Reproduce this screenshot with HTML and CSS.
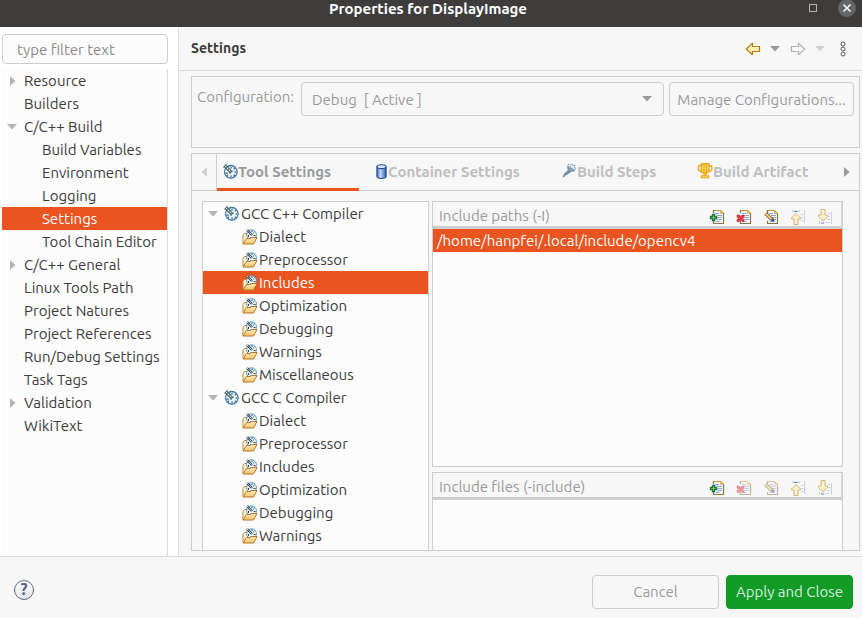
FILE: index.html
```html
<!DOCTYPE html>
<html lang="en">
<head>
<meta charset="utf-8">
<meta name="viewport" content="width=device-width, initial-scale=1">
<title>Properties for DisplayImage</title>
<link rel="stylesheet" href="styles.css">
</head>
<body>
<svg class="sprite" aria-hidden="true">
  <defs>
    <linearGradient id="gold" x1="0" y1="0" x2="0" y2="1"><stop offset="0" stop-color="#fffbe6"/><stop offset="1" stop-color="#fbe08c"/></linearGradient>
    <linearGradient id="blue" x1="0" y1="0" x2="1" y2="0"><stop offset="0" stop-color="#3c6ec0"/><stop offset=".4" stop-color="#c4d9f8"/><stop offset="1" stop-color="#2a58ae"/></linearGradient>
    <linearGradient id="folder" x1="0" y1="0" x2="0" y2="1"><stop offset="0" stop-color="#fff0bf"/><stop offset="1" stop-color="#f3c268"/></linearGradient>
  </defs>
  <symbol id="gauge" viewBox="0 0 14 14">
    <circle cx="7.300" cy="7.300" r="5.900" fill="#eef6ff" stroke="#3f77a3" stroke-width="1.200"/>
    <path d="M7.500 2.500v2M7.500 10.500v2M10.500 7.500h2M2.500 8.500h2M10 5l1.500-1.500M4.800 10l-1.300 1.300M10 10l1.500 1.500" stroke="#2c5d84"/>
    <path d="M1.500 1.500L8 8" stroke="#2b4a5f" stroke-width="2.800"/>
    <path d="M1.500 1.500L8 8" stroke="#e6e7b0" stroke-width="1.200" stroke-dasharray="2 .6"/>
    <path d="M0 3.500L3.500 0M6 9l3-3" stroke="#41667f" stroke-width=".8"/>
  </symbol>
  <symbol id="folder-gauge" viewBox="0 0 16 16">
    <path d="M1.500 14.500V6.500l1.500-2h2.500l1.500 1.500h6.500v4" fill="#fff3cf" stroke="#c08838"/>
    <circle cx="10" cy="5.700" r="4.900" fill="#f4f9ff" stroke="#4b93c4"/>
    <path d="M5.500 1l5 5" stroke="#2b4a5f" stroke-width="2.400"/>
    <path d="M5.500 1l5 5" stroke="#f0edb8" stroke-width="1" stroke-dasharray="1.500 .7"/>
    <path d="M10.500 1.500v1.500M13 3l-1.300 1.300M14 6.500h-2M7 6v2M11 8.500h2M9 8.500h1" stroke="#24425a"/>
    <path d="M1.500 15l3.500-5.500h4l1-1h5.500L12 15z" fill="url(#folder)" stroke="#b8752a"/>
  </symbol>
  <symbol id="cylinder" viewBox="0 0 10 14">
    <path d="M.7 2.500v9c0 2.600 8.600 2.600 8.600 0v-9z" fill="url(#blue)" stroke="#234c98"/>
    <ellipse cx="5" cy="2.500" rx="4.200" ry="1.800" fill="#d6e6fc" stroke="#234c98"/>
  </symbol>
  <symbol id="tool" viewBox="0 0 16 16">
    <path d="M.5 14.500l2-4L6 7.500 5.500 3l3-1 6 6-5 1-3 2.500-3 1.500-1.500 2z" fill="#7290a8"/>
    <path d="M6 2l1.500-1.500 1.500 1 2-1 1 2 2-.5-.5 2 1.500 1.500-1.500.5" fill="#dfe7ed" stroke="#7290a8" stroke-dasharray="2 1"/>
    <path d="M7 3.500l5 4M7 6l3 2" stroke="#a8bac7"/>
  </symbol>
  <symbol id="trophy" viewBox="0 0 16 16">
    <path d="M4 3H1.500Q.500 6 2 7.500T5 9M12 3h2.500q1 3-.5 4.500T11 9" fill="none" stroke="#eca321" stroke-width="1.300"/>
    <path d="M4 1q4-1 8 0v6q0 3-4 3.500Q4 10 4 7z" fill="#ffd75a" stroke="#eca321" stroke-width="1.300"/>
    <path d="M7 1v9M9.300 1v9" stroke="#eca321"/>
    <path d="M7 10h2v2.500H7zM4 12.800h8v2H4z" fill="#ffd75a" stroke="#eca321"/>
  </symbol>
  <symbol id="page" viewBox="0 0 16 16">
    <path d="M4.500 1.500h7l3 3v10h-10z" fill="#f2f6ff"/>
    <path d="M4 1.500h7.500l3 3" fill="none" stroke="#c29338" stroke-width="1.200"/>
    <path d="M4.500 1v3M14.500 4v10.500h-10V12" fill="none" stroke="#8d7741" stroke-width="1.200"/>
    <path d="M11 1.500V5h3.500z" fill="#e5b95f"/>
    <path d="M6 4.500h4M8 6.500h5M8 8.500h5M8 10.500h5M6.500 12.500h4" stroke="#8fa8d8"/>
  </symbol>
  <symbol id="add" viewBox="0 0 16 16">
    <use href="#page"/>
    <path d="M3.500 5.500h2v2h2v2h-2v2h-2v-2h-2v-2h2z" fill="#b9dc7c" stroke="#17763b" stroke-width="1.300"/>
  </symbol>
  <symbol id="remove" viewBox="0 0 16 16">
    <use href="#page"/>
    <path d="M1 6h2.500l1.300 1.500L6 6h2v2L6.700 9.300 8 10.500v2H6l-1.300-1.500-1.200 1.500H1v-2l1.500-1.200L1 8z" fill="#e23b46" stroke="#c8202d" stroke-width=".6"/>
  </symbol>
  <symbol id="edit" viewBox="0 0 16 16">
    <use href="#page"/>
    <path d="M2.500 4.500l6.500 6" stroke="#6d5128" stroke-width="3.400"/>
    <path d="M2.500 4.500l6 5.500" stroke="#f0c878" stroke-width="2"/>
    <path d="M8 12l3.500.8-.8-3.800z" fill="#30435c"/>
  </symbol>
  <symbol id="up" viewBox="0 0 16 16">
    <path d="M2.500 3V1M14.500 1v13M4 2.500h2M7 2.500h3M11 5.500h2M11 8.500h2M11 11.500h2" stroke="#c5d2e6"/>
    <path d="M3 1.500h8" stroke="#e1e4e6"/>
    <path d="M4 2.500h3" stroke="#5b83b8"/>
    <path d="M6 4.500L1.500 9v1H4v5.500h4V10h2.500V9z" fill="#fff1cc" stroke="#d4b67c"/>
  </symbol>
  <symbol id="down" viewBox="0 0 16 16">
    <path d="M2.500 12v3M14.500 3v12M11 4.500h2M11 7.500h2M10 10.500h3M8 13.500h4" stroke="#c5d2e6"/>
    <path d="M4 14h3" stroke="#5b83b8"/>
    <path d="M4 .500h4V6h2.500v1.500L6 12 1.500 7.500V6H4z" fill="#fff1cc" stroke="#d4b67c"/>
  </symbol>
  <symbol id="arrow-left" viewBox="0 0 16 14">
    <path d="M7.500 1.500v3h7v5h-7v3H7L1.300 7 7 1.500z" fill="url(#gold)" stroke="#bd7b0a" stroke-width="1.200"/>
  </symbol>
  <symbol id="arrow-right" viewBox="0 0 16 14">
    <path d="M8.500 1.500v3h-7v5h7v3H9L14.700 7 9 1.500z" fill="#fafafa" stroke="#b0b0b0" stroke-width="1.200"/>
  </symbol>
  <symbol id="caret" viewBox="0 0 10 6"><path d="M0 0h10L5 5.500z" fill="currentColor"/></symbol>
  <symbol id="caret-right" viewBox="0 0 6 10"><path d="M0 0v10l5.500-5z" fill="currentColor"/></symbol>
  <symbol id="caret-left" viewBox="0 0 6 10"><path d="M6 0v10L.500 5z" fill="currentColor"/></symbol>
</svg>

<div class="dialog">
  <header class="titlebar">
    <h1>Properties for DisplayImage</h1>
    <div class="window-buttons">
      <button class="plain" type="button" aria-label="Maximize"><svg width="18" height="18"><rect x="5.500" y="4.500" width="7" height="7" fill="none" stroke="#b7b6b3"/></svg></button>
      <button class="plain" type="button" aria-label="Close"><svg width="18" height="18"><circle cx="9" cy="8" r="9" fill="#656565"/><path d="M5.500 4.500l7 7M12.500 4.500l-7 7" stroke="#fff" stroke-width="1.500"/></svg></button>
    </div>
  </header>

  <div class="workspace">
    <nav class="sidebar" aria-label="Property pages">
      <input class="filter" type="text" placeholder="type filter text" aria-label="Filter">
      <ul class="tree pages">
        <li><svg class="twist side"><use href="#caret-right"/></svg>Resource</li>
        <li>Builders</li>
        <li><svg class="twist down"><use href="#caret"/></svg>C/C++ Build</li>
        <li class="child">Build Variables</li>
        <li class="child">Environment</li>
        <li class="child">Logging</li>
        <li class="child selected">Settings</li>
        <li class="child">Tool Chain Editor</li>
        <li><svg class="twist side"><use href="#caret-right"/></svg>C/C++ General</li>
        <li>Linux Tools Path</li>
        <li>Project Natures</li>
        <li>Project References</li>
        <li>Run/Debug Settings</li>
        <li>Task Tags</li>
        <li><svg class="twist side"><use href="#caret-right"/></svg>Validation</li>
        <li>WikiText</li>
      </ul>
    </nav>

    <main class="page">
      <div class="page-header">
        <h2>Settings</h2>
        <div class="history">
          <button class="plain" type="button" aria-label="Back"><svg width="16" height="14"><use href="#arrow-left"/></svg></button>
          <button class="plain drop" type="button" aria-label="Back history"><svg width="10" height="6"><use href="#caret"/></svg></button>
          <button class="plain" type="button" aria-label="Forward"><svg width="16" height="14"><use href="#arrow-right"/></svg></button>
          <button class="plain drop faint" type="button" aria-label="Forward history"><svg width="10" height="6"><use href="#caret"/></svg></button>
          <button class="plain" type="button" aria-label="Menu"><svg width="6" height="16"><g fill="#fff" stroke="#555"><circle cx="3" cy="3" r="2"/><circle cx="3" cy="8" r="2"/><circle cx="3" cy="13" r="2"/></g></svg></button>
        </div>
      </div>

      <div class="page-body">
        <section class="config">
          <label for="configuration">Configuration:</label>
          <div class="combo">
            <select id="configuration"><option>Debug&nbsp; [ Active ]</option></select>
            <svg width="10" height="6"><use href="#caret"/></svg>
          </div>
          <button class="button manage" type="button">Manage Configurations...</button>
        </section>

        <section class="folder">
          <div class="tabs">
            <button class="plain scroll back" type="button" aria-label="Previous tabs"><svg width="6" height="10"><use href="#caret-left"/></svg></button>
            <div class="tab-list">
              <button class="plain tab medium active" type="button"><svg width="15" height="15"><use href="#gauge"/></svg>Tool Settings</button>
              <button class="plain tab wide" type="button"><svg width="13" height="15"><use href="#cylinder"/></svg>Container Settings</button>
              <button class="plain tab narrow" type="button"><svg width="15" height="16"><use href="#tool"/></svg>Build Steps</button>
              <button class="plain tab medium" type="button"><svg width="16" height="16"><use href="#trophy"/></svg>Build Artifact</button>
            </div>
            <button class="plain scroll" type="button" aria-label="Next tabs"><svg width="6" height="10"><use href="#caret-right"/></svg></button>
          </div>

          <div class="tab-body">
            <ul class="tree tools">
              <li class="root"><svg class="twist down"><use href="#caret"/></svg><svg width="15" height="15"><use href="#gauge"/></svg>GCC C++ Compiler</li>
              <li><svg class="item"><use href="#folder-gauge"/></svg>Dialect</li>
              <li><svg class="item"><use href="#folder-gauge"/></svg>Preprocessor</li>
              <li class="selected"><svg class="item"><use href="#folder-gauge"/></svg>Includes</li>
              <li><svg class="item"><use href="#folder-gauge"/></svg>Optimization</li>
              <li><svg class="item"><use href="#folder-gauge"/></svg>Debugging</li>
              <li><svg class="item"><use href="#folder-gauge"/></svg>Warnings</li>
              <li><svg class="item"><use href="#folder-gauge"/></svg>Miscellaneous</li>
              <li class="root"><svg class="twist down"><use href="#caret"/></svg><svg width="15" height="15"><use href="#gauge"/></svg>GCC C Compiler</li>
              <li><svg class="item"><use href="#folder-gauge"/></svg>Dialect</li>
              <li><svg class="item"><use href="#folder-gauge"/></svg>Preprocessor</li>
              <li><svg class="item"><use href="#folder-gauge"/></svg>Includes</li>
              <li><svg class="item"><use href="#folder-gauge"/></svg>Optimization</li>
              <li><svg class="item"><use href="#folder-gauge"/></svg>Debugging</li>
              <li><svg class="item"><use href="#folder-gauge"/></svg>Warnings</li>
            </ul>

            <div class="lists">
              <section class="list paths">
                <div class="list-header">
                  <h3>Include paths (-I)</h3>
                  <div class="actions">
                    <button class="plain" type="button" aria-label="Add"><svg><use href="#add"/></svg></button>
                    <button class="plain" type="button" aria-label="Delete"><svg><use href="#remove"/></svg></button>
                    <button class="plain" type="button" aria-label="Edit"><svg><use href="#edit"/></svg></button>
                    <button class="plain" type="button" aria-label="Move up"><svg><use href="#up"/></svg></button>
                    <button class="plain" type="button" aria-label="Move down"><svg><use href="#down"/></svg></button>
                  </div>
                </div>
                <ul class="tree entries"><li class="selected">/home/hanpfei/.local/include/opencv4</li></ul>
              </section>
              <section class="list files">
                <div class="list-header">
                  <h3>Include files (-include)</h3>
                  <div class="actions">
                    <button class="plain" type="button" aria-label="Add"><svg><use href="#add"/></svg></button>
                    <button class="plain" type="button" aria-label="Delete" disabled><svg><use href="#remove"/></svg></button>
                    <button class="plain" type="button" aria-label="Edit" disabled><svg><use href="#edit"/></svg></button>
                    <button class="plain" type="button" aria-label="Move up"><svg><use href="#up"/></svg></button>
                    <button class="plain" type="button" aria-label="Move down"><svg><use href="#down"/></svg></button>
                  </div>
                </div>
              </section>
            </div>
          </div>
        </section>
      </div>
    </main>
  </div>

  <footer class="footer">
    <button class="plain help" type="button" aria-label="Help"><span>?</span></button>
    <div class="footer-buttons">
      <button class="button" type="button">Cancel</button>
      <button class="button primary" type="button">Apply and Close</button>
    </div>
  </footer>
</div>
</body>
</html>
```
FILE: styles.css
```css
* { box-sizing: border-box; }

body {
  margin: 0;
  color: #3b3b3b;
  background: #f7f7f7;
  font: 15px/23px Ubuntu, "Noto Sans", sans-serif;
}

h1, h2, h3, ul { margin: 0; padding: 0; }
h1 { font-size: 15px; }
h2 { font-size: 14px; }
h3 { font-size: 15px; font-weight: 400; }
svg { flex: none; display: block; }
button, input, select { font: inherit; color: inherit; }

.sprite { position: absolute; width: 0; height: 0; }

.plain {
  display: flex;
  align-items: center;
  padding: 0;
  border: 0;
  background: none;
}

.dialog {
  display: flex;
  flex-direction: column;
  min-height: 100vh;
}

/* Title bar */
.titlebar {
  display: grid;
  grid-template-columns: 1fr auto 1fr;
  height: 27px;
  padding-right: 6px;
  color: #fff;
  background: #3e3d3b;
}
.titlebar h1 { grid-column: 2; line-height: 18px; }
.window-buttons {
  display: flex;
  justify-content: flex-end;
  align-items: flex-start;
  gap: 16px;
}

/* Layout */
.workspace { display: flex; flex: 1; border-bottom: 1px solid #dcdcdc; }
.sidebar {
  display: flex;
  flex-direction: column;
  flex: 0 0 178px;
  gap: 5px;
  padding: 7px 10px 0 2px;
  background: #fff;
}
.filter {
  width: 100%;
  height: 30px;
  padding: 0 14px;
  border: 1px solid #cdcdcd;
  border-radius: 4px;
  background: #fcfcfc;
}
.filter::placeholder { color: #8b8b8b; opacity: 1; }

/* Trees */
.tree { list-style: none; background: #fcfcfc; }
.tree li {
  display: flex;
  align-items: center;
  height: 23px;
  white-space: nowrap;
}
.tree .selected { color: #fff; background: #e95420; }
.twist { color: #b4b4b4; }
.twist.side { width: 6px; height: 10px; margin: 0 8px; }
.twist.down { width: 10px; height: 6px; margin: 0 7px 0 5px; }

.pages { flex: 1; border-right: 1px solid #dcdcdc; }
.pages li { padding-left: 22px; }
.pages li:has(.twist) { padding-left: 0; }
.pages .child { padding-left: 40px; }

/* Page */
.page {
  display: flex;
  flex-direction: column;
  flex: 1;
  min-width: 0;
  border-left: 1px solid #dcdcdc;
}
.page-header {
  display: flex;
  justify-content: space-between;
  align-items: center;
  height: 44px;
  padding: 0 16px 0 12px;
  border-bottom: 1px solid #dcdcdc;
}
.history { display: flex; gap: 9px; color: #9a9a9a; }
.history .drop { margin-right: 1px; }
.history .faint { margin-right: 6px; color: #d0d0d0; }

.page-body {
  display: flex;
  flex-direction: column;
  flex: 1;
  gap: 5px;
  padding: 5px 2px 5px 12px;
}
.config {
  display: flex;
  gap: 5px;
  height: 72px;
  padding: 5px;
  border: 1px solid #cdcdcd;
  color: #9a9a9a;
}
.config label { flex: 0 0 99px; line-height: 30px; }
.combo { position: relative; flex: 1; height: 34px; }
.combo select {
  width: 100%;
  height: 100%;
  padding: 0 10px;
  border: 1px solid #cdcdcd;
  border-radius: 4px;
  background: #f7f7f7;
  appearance: none;
}
.combo svg { position: absolute; right: 12px; top: 14px; pointer-events: none; }
.button {
  width: 127px;
  height: 34px;
  padding: 0;
  border: 1px solid #cdcdcd;
  border-radius: 4px;
  color: #9a9a9a;
  background: #f7f7f7;
  white-space: nowrap;
}
.manage { width: 185px; }

/* Tab folder */
.folder {
  display: flex;
  flex-direction: column;
  flex: 1;
  border: 1px solid #cdcdcd;
}
.tabs { display: flex; height: 37px; border-bottom: 1px solid #cdcdcd; }
.scroll { flex: none; width: 24px; justify-content: center; color: #9a9a9a; }
.scroll.back { color: #cdcdcd; }
.tab-list { display: flex; flex: 1; gap: 10px; border-left: 1px solid #cdcdcd; }
.tab {
  height: 37px;
  padding: 0 6px;
  border-bottom: 3px solid transparent;
  color: #bebebe;
  font-weight: 700;
  white-space: nowrap;
}
.tab.active { color: #9a9a9a; border-color: #e95420; }
.tab.narrow { width: 125px; }
.tab.medium { width: 142px; }
.tab.wide { width: 177px; }

.tab-body {
  display: grid;
  grid-template-columns: 227px 1fr;
  flex: 1;
  gap: 3px;
  padding: 10px 16px 0 10px;
}
.tools { border: 1px solid #cdcdcd; border-bottom: 0; }
.tools li { padding-left: 38px; }
.tools .root { gap: 2px; padding-left: 0; }
.tools .root .down { margin-right: 4px; }
.tools .item { width: 17px; height: 16px; margin-right: 1px; }

.lists { display: flex; flex-direction: column; gap: 5px; min-width: 0; }
.list { border: 1px solid #cdcdcd; background: #fcfcfc; }
.paths { flex: 1; }
.files { height: 78px; border-bottom: 0; }
.list-header {
  display: flex;
  justify-content: space-between;
  align-items: center;
  height: 27px;
  padding: 2px 8px 0 6px;
  border-right: 1px solid #dcdcdc;
  border-bottom: 3px solid #cdcdcd;
  color: #9a9a9a;
  background: #f7f7f7;
}
.actions { display: flex; gap: 11px; padding-top: 4px; }
.actions svg { width: 16px; height: 16px; }
.actions :disabled { opacity: 0.5; }
.entries li { padding-left: 4px; }

/* Footer */
.footer {
  display: flex;
  justify-content: space-between;
  align-items: center;
  height: 61px;
  padding: 8px 9px 0 14px;
}
.footer-buttons { display: flex; gap: 7px; }
.primary { border-color: #129b27; color: #d8f0dc; background: #129b27; }
.help {
  justify-content: center;
  width: 20px;
  height: 20px;
  margin-bottom: 4px;
  border: 1px solid #5a6b8c;
  border-radius: 50%;
  color: #4d6084;
  background: linear-gradient(#fff, #e4e4e4);
  font-size: 16px;
  font-weight: 700;
}
```
